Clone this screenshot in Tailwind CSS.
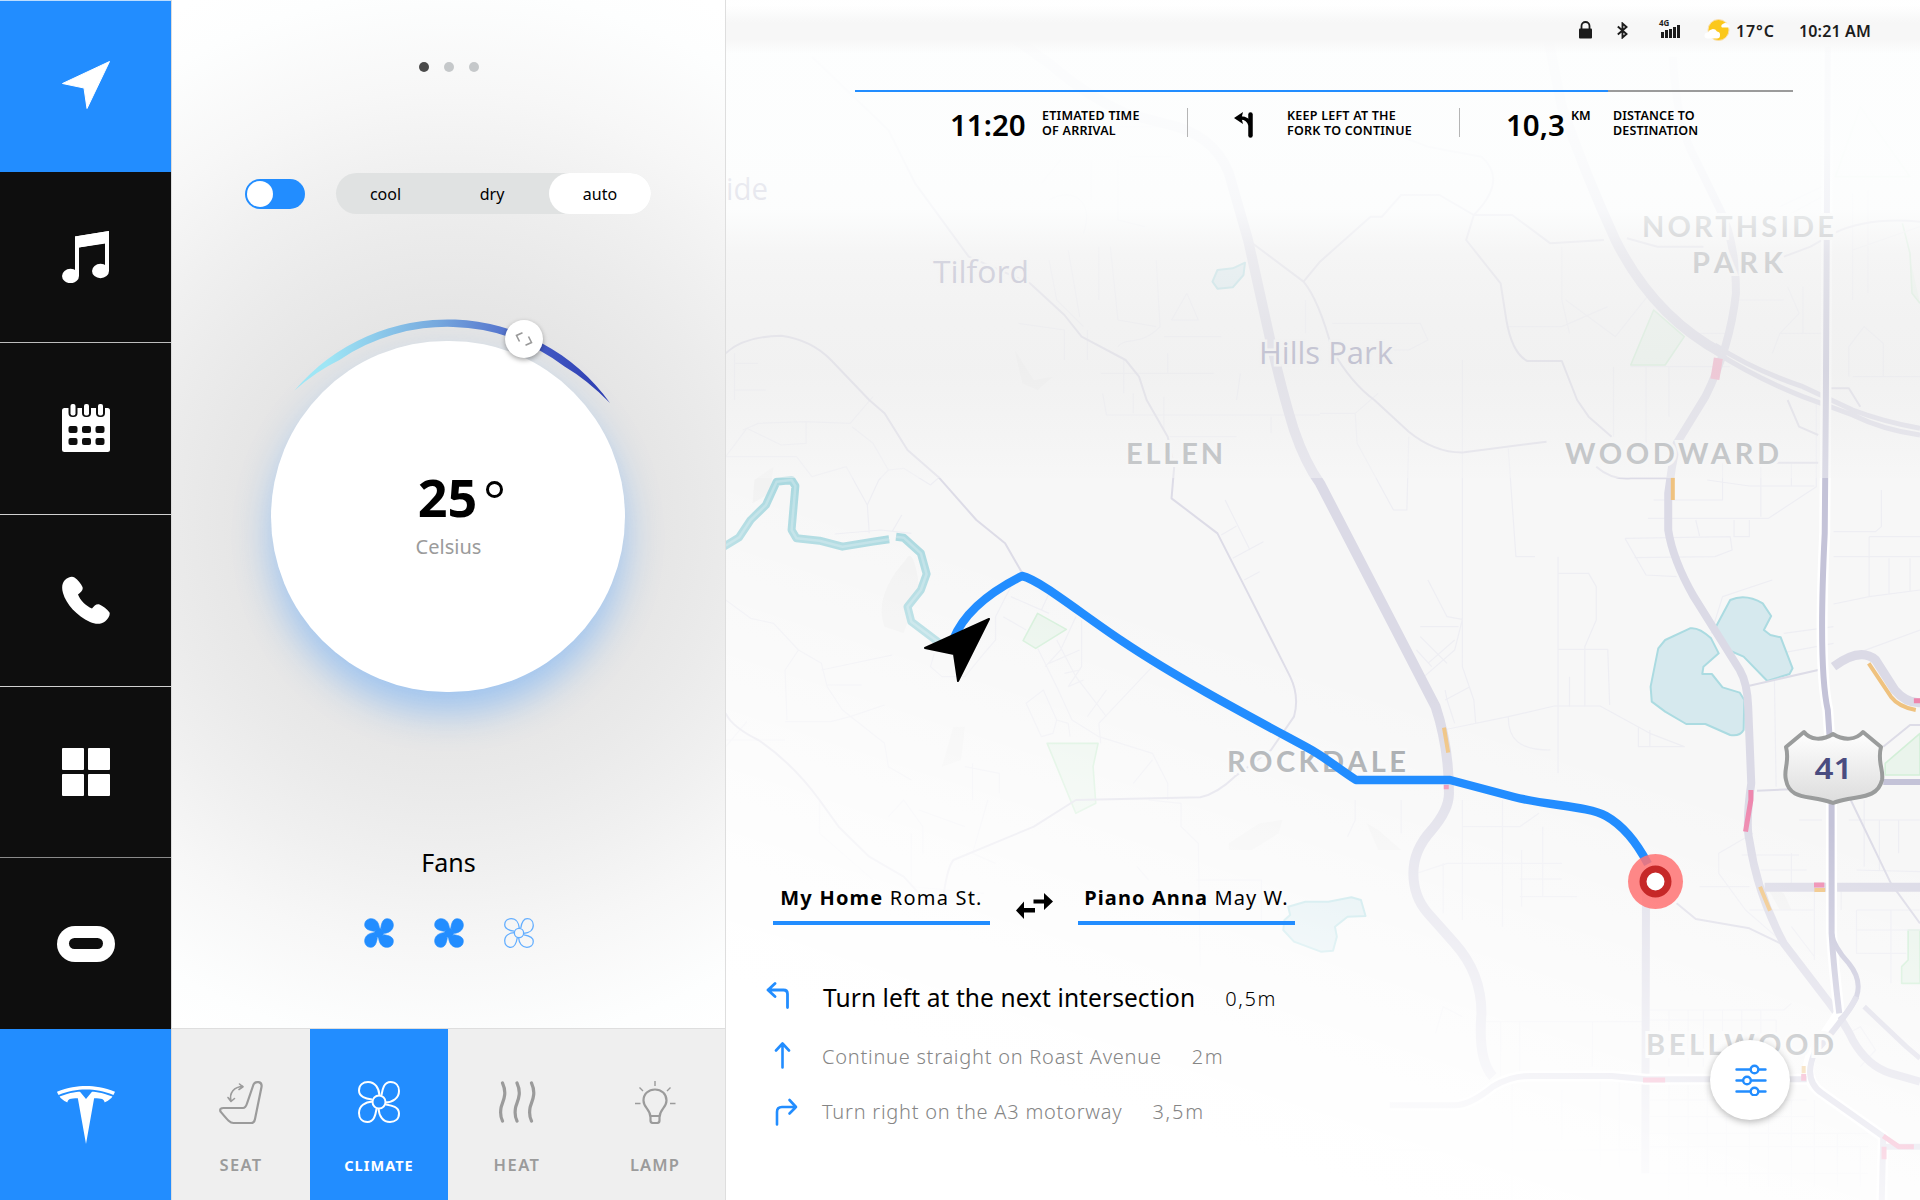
<!DOCTYPE html>
<html lang="en">
<head>
<meta charset="utf-8">
<title>Car dashboard</title>
<script src="https://cdn.jsdelivr.net/npm/@tailwindcss/browser@4"></script>
</head>
<body class="flex w-[1920px] h-[1200px] overflow-hidden bg-white text-black font-['Noto_Sans',sans-serif]">

<svg class="hidden">
  <symbol id="petals" viewBox="0 0 42 42">
    <path id="petal" d="M14 18.500C8 17.500 1 16 1 9.500C1 4 5 1 10 1C17 1 21 7 21.500 14.500"/>
    <use href="#petal" transform="rotate(90 21 21)"/><use href="#petal" transform="rotate(180 21 21)"/><use href="#petal" transform="rotate(270 21 21)"/>
    <circle cx="21" cy="21" r="6.500"/>
  </symbol>
</svg>

<!-- Main navigation -->
<nav class="flex flex-col w-[172px] shrink-0 border-r border-[#dcdcdc] bg-[#0e0e0e] text-white">
  <a class="flex h-[172px] items-center justify-center bg-[#228dff] border-t border-white/70 pb-[3px]"><svg class="size-12" viewBox="0 0 48 48"><path fill="currentColor" stroke="currentColor" stroke-linejoin="round" d="M47.500.500L.500 22.500l21.500 4.500l3 20.500z"/></svg></a>
  <a class="flex h-[171px] items-center justify-center border-b border-[#bdbdbd]"><svg class="size-[52px]" viewBox="0 0 52 52" fill="currentColor"><path d="M15 5.500L49 0v40h-4V12L19 16.500V45h-4z"/><path d="M15 5.500L49 0v12L15 17z"/><ellipse cx="10.500" cy="45" rx="8.500" ry="7.200"/><ellipse cx="40.500" cy="40" rx="8.500" ry="7.200"/></svg></a>
  <a class="flex h-[172px] items-center justify-center border-b border-[#d0d0d0] pb-px"><svg class="size-12" viewBox="0 0 48 48"><rect y="4" width="48" height="44" rx="2.500" fill="#fff"/><g fill="#0e0e0e"><rect x="6.500" y="-3" width="9" height="16" rx="4"/><rect x="20" y="-3" width="9" height="16" rx="4"/><rect x="34" y="-3" width="9" height="16" rx="4"/><rect x="6.500" y="22" width="9" height="7" rx="2"/><rect x="20" y="22" width="9" height="7" rx="2"/><rect x="33.500" y="22" width="9" height="7" rx="2"/><rect x="6.500" y="34" width="9" height="7" rx="2"/><rect x="20" y="34" width="9" height="7" rx="2"/><rect x="33.500" y="34" width="9" height="7" rx="2"/></g><g fill="#fff"><rect x="8.500" y="0" width="5" height="11.500" rx="2"/><rect x="22" y="0" width="5" height="11.500" rx="2"/><rect x="36" y="0" width="5" height="11.500" rx="2"/></g></svg></a>
  <a class="flex h-[172px] items-center justify-center border-b border-[#d0d0d0] pb-px"><svg class="size-12" viewBox="0 0 48 48"><path fill="currentColor" d="M2.500 4.500C6 1 10 0 12.500 1.500C16 4 19 8 20.500 11C21.500 14 19 16.500 16 18.500C18 24 24 30 30 32.500C32 30 34.500 27.500 37.500 28.500C41 30 45 33 47.500 36.500C48.500 39 46 43 43 45.500C39 48.500 33.500 48.500 28 46C15 40 4 28 1 17C-.500 12 0 7.500 2.500 4.500z"/></svg></a>
  <a class="flex h-[171px] items-center justify-center border-b border-[#8a8a8a]"><span class="grid size-12 grid-cols-2 gap-1"><i class="rounded-[1px] bg-white"></i><i class="rounded-[1px] bg-white"></i><i class="rounded-[1px] bg-white"></i><i class="rounded-[1px] bg-white"></i></span></a>
  <a class="flex h-[171px] items-center justify-center"><span class="h-[36px] w-[58px] rounded-[18px] bg-white px-[12px] py-[12.500px]"><i class="block h-full rounded-full bg-[#0e0e0e]"></i></span></a>
  <a class="flex h-[171px] items-center justify-center bg-[#228dff]"><svg class="size-[58px]" viewBox="0 0 24 24"><path fill="currentColor" d="M12 5.362l2.475-3.026s4.245.09 8.471 2.054c-1.082 1.636-3.231 2.438-3.231 2.438-.146-1.439-1.154-1.790-4.354-1.790L12 24 8.619 5.034c-3.180 0-4.188.354-4.335 1.792 0 0-2.146-.795-3.229-2.430C5.280 2.431 9.525 2.340 9.525 2.340L12 5.362zM12 1.463c3.415-.030 7.326.528 11.328 2.280.535-.968.672-1.395.672-1.395C19.625.612 15.528.015 12 0 8.472.015 4.375.610 0 2.349c0 0 .195.525.672 1.396C4.674 1.989 8.585 1.435 12 1.463z"/></svg></a>
</nav>

<!-- Climate panel -->
<section class="flex w-[554px] shrink-0 flex-col items-center border-r border-[#dedede] bg-[radial-gradient(circle_at_277px_520px,#e4e4e4_0px,#e5e5e5_200px,#ebebeb_285px,#f0f0f0_350px,#f7f7f7_430px,#fdfefe_530px,#ffffff_580px)]">
  <div class="mt-[62px] flex gap-[15px]"><i class="size-[10px] rounded-full bg-[#4a4a4a]"></i><i class="size-[10px] rounded-full bg-[#c5c8ca]"></i><i class="size-[10px] rounded-full bg-[#c5c8ca]"></i></div>

  <div class="-ml-px mt-[101px] flex h-[41px] w-[406px] items-center justify-between">
    <div class="mt-px h-[30px] w-[60px] rounded-full bg-[#228dff] p-[2px]"><i class="block size-[26px] rounded-full bg-white"></i></div>
    <div class="flex h-full w-[315px] rounded-full bg-[#e0e2e2] text-base leading-[43px]">
      <span class="w-[99px] text-center">cool</span>
      <span class="w-[114px] text-center">dry</span>
      <span class="w-[102px] rounded-full bg-white text-center">auto</span>
    </div>
  </div>

  <div class="relative -ml-px mt-[127px] flex h-[351px] w-[354px] flex-col items-center rounded-full bg-white shadow-[0_20px_36px_rgba(60,150,255,0.42)]">
    <svg class="absolute -top-[31px] left-0 h-[110px] w-[354px] overflow-visible" viewBox="271.500 310 354 110">
      <defs><linearGradient id="arc"><stop offset="0.100" stop-color="#9fe6f5"/><stop offset="0.450" stop-color="#77a9de"/><stop offset="0.780" stop-color="#4359c4"/><stop offset="1" stop-color="#2b3bb0"/></linearGradient></defs>
      <path fill="url(#arc)" d="M295 390.500A200 200 0 0 1 610.500 403Q588 380 565 366.500A192.500 192.500 0 0 0 340 359.900Q316 371.500 295 390.500z"/>
    </svg>
    <div class="absolute -top-[21px] left-[234px] flex size-[38px] items-center justify-center rounded-full bg-white shadow-[0_2px_5px_rgba(0,0,0,0.350)]"><svg class="size-[18px]" viewBox="0 0 18 18" fill="none" stroke="#999" stroke-width="1.600"><path d="M7.500 2.800L1.500 5.500L4.500 11.500M10.500 15.200L16.500 12.500L13.500 6.500"/></svg></div>
    <div class="mt-[131px] ml-[25px] flex h-[50px] gap-[9px] text-[52px] font-bold leading-[50px]"><span>25</span><i class="mt-[9px] size-[17px] rounded-full border-[3px] border-black"></i></div>
    <div class="mt-[11px] ml-px text-[20px] leading-[28px] text-[#9b9b9b]">Celsius</div>
  </div>

  <div class="mt-[152px] text-[25px] leading-[36px]">Fans</div>
  <div class="mt-[38px] flex gap-10">
    <svg class="size-[30px] overflow-visible fill-[#228dff] stroke-[#228dff]"><use href="#petals"/></svg>
    <svg class="size-[30px] overflow-visible fill-[#228dff] stroke-[#228dff]"><use href="#petals"/></svg>
    <svg class="size-[30px] overflow-visible fill-none stroke-[#63aeff] stroke-[1.800]"><use href="#petals"/></svg>
  </div>

  <div class="mt-auto grid h-[172px] w-full grid-cols-[138px_138px_138px_138px] border-t border-[#dedede] bg-[#efefef] text-[16.500px] font-semibold leading-6 text-[#9b9b9b]">
    <div class="flex flex-col items-center pt-[52px]">
      <svg class="h-[43px] w-[44px] overflow-visible" viewBox="0 0 44 43" fill="none" stroke="currentColor" stroke-width="2.200" stroke-linecap="round" stroke-linejoin="round"><path d="M34.500 3.500C36.500-.500 43.500.500 42.500 6L36 38C35.500 41 34 42 32 42H14.500C11 42 9 39.500 1.500 30.500C.500 28 2 27 4.500 27H24C26 27 27 25.500 28 22.500z"/><path stroke-width="1.600" d="M12 20C10 12 15 5.500 24 5.500M20.500 3L24 5.800L20 8.500M9 16.500L12 20.500L15.500 17.500"/></svg>
      <span class="mt-[29px] tracking-[1.300px]">SEAT</span>
    </div>
    <div class="flex flex-col items-center bg-[#228dff] pt-[52px] text-[14.500px] font-bold text-white">
      <svg class="size-[42px] overflow-visible fill-none stroke-white stroke-2"><use href="#petals"/></svg>
      <span class="mt-[30px] tracking-[1.050px]">CLIMATE</span>
    </div>
    <div class="flex flex-col items-center pt-[52px]">
      <svg class="h-[42px] w-[40px]" viewBox="0 0 40 42" fill="none" stroke="currentColor" stroke-width="3.200" stroke-linecap="round"><path d="M5.500 2C11 14 5 21 4 27C3 33 4 37 5.500 40M20 2C25.500 14 19.500 21 18.500 27C17.500 33 18.500 37 20 40M34.500 2C40 14 34 21 33 27C32 33 33 37 34.500 40"/></svg>
      <span class="mt-[30px] tracking-[1.500px]">HEAT</span>
    </div>
    <div class="flex flex-col items-center pt-[52px]">
      <svg class="h-[43px] w-[42px]" viewBox="0 0 42 43" fill="none" stroke="currentColor" stroke-width="2.200" stroke-linejoin="round"><path d="M16.500 36.500C16.500 28 9.500 27 9.500 19.500C9.500 13 14.500 8.500 21 8.500S32.500 13 32.500 19.500C32.500 27 25.500 28 25.500 36.500V39.500Q25.500 42 23 42H19Q16.500 42 16.500 39.500zM16.500 35H25.500"/><path stroke-width="1.400" d="M21 0V5M5.500 6.500L9 10M36.500 6.500L33 10M1 22.500H6.500M36 22.500H41.500"/></svg>
      <span class="mt-[29px] tracking-[1.100px]">LAMP</span>
    </div>
  </div>
</section>

<!-- Navigation map -->
<main class="relative h-[1200px] grow overflow-hidden bg-[#f7f7f7]">
  <svg class="absolute top-0 -left-[6px] h-[1200px] w-[1200px] [&_path]:[vector-effect:non-scaling-stroke]" viewBox="0 0 3136 3600" preserveAspectRatio="none" fill="none" stroke-linejoin="round">
    <!-- open ground -->
    <g fill="#f2f2f2"><path d="M485 1680C500 1640 515 1700 520 1760L480 1900L430 1880C410 1820 430 1750 485 1680zM90 1440L140 1400L130 1480L85 1510zM770 1050L820 1140L870 1130L830 1170L790 1150zM2730 2650l40 80 30 0-20-50zM1330 2530l80-60 60-10-10 40-70 50-60 0zM1690 2470l30 20 60 60-60 0zM610 2180l30 0-10 100-50 20z"/></g>
    <!-- parks -->
    <g fill="#eaf4ec" stroke="#d3efd8" stroke-width="1.600"><path d="M830 1840L905 1888L825 1945L792 1922zM855 2230H988L975 2300L982 2410L930 2440zM2440 930L2520 1010L2470 1095H2380zM3136 2200L3045 2290V2325H3136zM3136 2790H3105V2880L3088 2900V2950H3136zM3090 670L3110 760L3115 880L3136 910"/><path stroke-opacity=".5" fill="none" d="M2915 530L2980 320L3110 530z"/></g>
    <!-- minor streets -->
    <g stroke="#eeeef3" stroke-width="1.200">
      <path d="M15 1370H200L240 1430L330 1400L385 1515L390 1600M60 1290L100 1270L220 1265L340 1270L400 1190M225 1265V1330L160 1335L70 1285L15 1370M345 1280L400 1330L440 1410L415 1440L385 1515M440 1410L480 1405L550 1455L575 1430M300 1602L420 1590L500 1600M475 1545L450 1595"/>
      <path d="M15 1800L80 1855L140 1870L205 1950L265 1990L280 2060L320 2130L430 2230L440 2300L500 2340M205 1950L170 2010L175 2160M265 2010L450 1965M280 2055H370M170 2165H290L340 2150L430 2115M70 2165L15 2240M15 2220H170"/>
      <path d="M760 1760L720 1850V1920L690 1960L640 2030H580L550 2000L560 1960M760 1790L860 1840M740 1850L800 1890M860 1780L840 1830M930 1850L890 1950L850 2000M945 1860V2000L910 2060M830 1945L880 2060L920 2160L990 2210L1130 2260L1170 2350V2400M880 1920L930 2030L1010 2150M860 1990L940 1950M900 2020L940 2010M910 2060L950 2040M845 2070L880 2160L870 2200L840 2210L800 2110zM880 2160L910 2170L915 2210M960 2150L1010 2070M990 2170L1130 2000M990 2170L995 2230M1080 2350L1130 2280"/>
      <path d="M1320 1500L1385 1650M1310 1605L1350 1578M1340 1675L1420 1625M1370 1740L1410 1715M1000 1180L1010 1245H1568M1080 1180V1240M1175 1310H1350M1440 1250V1300M1160 1190V1290"/>
      <path d="M1940 1200V2000L1970 2100L1975 2170M1660 1240L1665 1330L1760 1530L1795 1530L1800 1310M1568 1240H1660L1720 1180M2060 1345L2080 1670H2130M2190 1670V2320M2190 1720H2270L2290 1760V1860L2260 1940V2120M2190 1948H2320L2325 2115M2220 2030V2120M1890 2190L2060 2150L2180 2118H2300L2430 2200L2520 2240H2400V2180M2430 2190V2240M2060 2150C2060 2220 2090 2250 2170 2250M1895 2070L1900 2100L1920 2170M1960 2060L1895 2100M1850 1740L1900 1850L1940 1858L1920 1950L1840 2030M1830 1880H1930M1830 1910L1900 1990M1850 1990L1920 1920M1820 1950L1860 2000"/>
      <path d="M2440 1500L2620 1500V1390M2425 1555H2740L2865 1460V1200M2365 1615L2420 1725L2500 1730M2365 1615L2640 1610L2645 1650L2600 1670L2390 1673M2550 1560L2560 1608M2650 1560V1610H2690V1560M2720 1400V1550M2580 1440L2690 1458H2860M2800 1390V1458M2910 1595H3020L3035 1580V1470M2910 1670H3136M3003 1610V1790M3003 1610H3136M3055 1675V1780M3110 1675V1775M2910 1812L3003 1790L3136 1770M2910 1880L2780 1900M2910 1930L2770 1960M2590 1900L2620 1790L2750 1740M2755 2000L2760 2360M2970 1960L3136 1890"/>
      <path d="M1040 380H1180M1070 470H1180M890 480L840 550M970 480V600M1040 480V660L1110 680M860 600C920 560 980 600 950 700M780 970L900 990V1080M860 780L880 900L950 980M910 750L940 950M990 740V900M1020 740L1040 960L1140 980M1140 780L1150 980C1100 1040 1060 1010 1040 1040M1220 880L1180 960H1250zM1160 1010H1310M960 990V1080M1055 1080V1180M995 1120H1290M1170 1060V1120M1360 1120L1350 1200M1530 900V1000M38 1060V1200M40 1090H100M40 1170H120"/>
      <path d="M1600 970H1830L1850 1020L1800 1050H1760M2200 740V900L2220 1000M2060 980H2200L2320 920M2210 900L2340 1010L2430 880M2380 1100H2640M2335 1100V1310M2420 1100V1330M2480 1100V1250M1940 1080V1200M2650 900H2780M2560 1000H2640M2770 1000H2880M2790 860L2820 940L2770 1000L2750 1060M2770 620L2880 560M2800 640L2880 590M2960 580V900M3000 570V880M2960 750L3136 680M2950 1130V1040L2990 980L3040 1030V1130M2960 1130H3136M2830 860V1000"/>
      <path d="M1660 2400V2460L1640 2510M1780 2400V2500M1940 2400V2760M1940 2480H2090L2140 2440M2045 2400V2780M2095 2550V2720M2150 2480L2150 2690M1820 2620L1900 2590H2200M1890 2590V2740M2090 2637H2200M2090 2690H2240M2700 2500L2610 2560L2610 2620L2680 2730L2780 2830M2670 2565H2820M2720 2610H2840M2800 2560V2650M2820 2460H2880M2950 2460H3136M2990 2400V2600M3030 2460V2610M3080 2460V2560M2970 2610L3136 2615M2560 2660H2690M2690 2730H2860M2860 2660V2880M2970 2730H3136M2970 2730V2860H3100M2970 2790H3136M2930 2730V2660M3060 2730V2950M2800 2780L2860 2870"/>
      <path d="M2430 3030H2780L2800 3010M2430 3060H2760V3200M2480 3030V3200M2530 3030V3200M2570 3030V3200M2620 3030V3100M2670 3030V3100M2720 3030V3100M1990 3065H2410M2040 3065V3230M2090 3065V3240M2280 3065V3200M2300 3240V3500M2350 3240V3500M2200 3270V3420M2070 3240V3600M1750 3450H2400M2430 3300H2840M2430 3350H2860M2430 3400H3000M2430 3440H3000M2430 3520H3000M2480 3250V3600M2530 3250V3600M2580 3250V3560M2630 3350V3560M2690 3350V3560M2740 3300V3560M2800 3300V3560M2860 3300V3560M2920 3400V3560M2980 3440V3560M1870 3100L1890 3020L1940 3050M2950 3100L2980 3080L3020 3150L2980 3200"/>
      <path d="M440 2450L480 2400L530 2480V2560M260 2400V2500L400 2640M700 2400L660 2560L720 2590M1120 2400L1205 2410V2480L1250 2530L1255 2900M1245 2640H1415V2760M520 2430L640 2480M500 2500V2660L690 2680M1090 2600L1120 2640M640 2300L730 2320V2380M660 2290V2400"/>
    </g>
    <!-- river and lakes -->
    <path stroke="#abd9e0" stroke-width="8" d="M10 1640L50 1612L80 1560L120 1515L148 1445L187 1440L197 1458L187 1590L200 1615L260 1622L320 1640L400 1625L442 1618M460 1610L480 1613L525 1660L540 1722L525 1770L490 1820L500 1865L575 1930"/>
    <path stroke="#bfe1e7" stroke-width="2.500" d="M10 1640L50 1612L80 1560L120 1515L148 1445L187 1440L197 1458L187 1590L200 1615L260 1622L320 1640L400 1625L442 1618M460 1610L480 1613L525 1660L540 1722L525 1770L490 1820L500 1865L575 1930"/>
    <g fill="#d6e9ee" stroke="#abdbe1" stroke-width="2"><path d="M2535 1885C2550 1882 2565 1888 2590 1915L2610 1960L2570 2000L2567 2022L2592 2022L2620 2062L2665 2078L2677 2100L2675 2190Q2665 2210 2640 2205L2575 2172H2525L2470 2135L2435 2105L2432 2060L2452 1945L2470 1920zM2640 1800Q2680 1780 2725 1810L2747 1848L2728 1890L2745 1905L2772 1912L2803 2005L2795 2022L2737 2043L2675 1970L2635 1950L2602 1882zM1485 2720L1530 2705H1590L1650 2692L1675 2700L1687 2748L1640 2750L1607 2780L1612 2810L1602 2852L1570 2855L1500 2825L1472 2790L1475 2760L1490 2745zM1300 810L1340 805L1372 788L1368 825L1340 862L1300 866L1287 845z"/></g>
    <!-- secondary roads -->
    <g stroke="#dddce7" stroke-width="2">
      <path d="M240 170L440 390L510 550L650 770L810 850L900 945L945 1010L1060 1080L1095 1130L1115 1200L1170 1310L1187 1400L1180 1495L1300 1600L1380 1780L1490 2030Q1515 2090 1500 2150L1440 2250L1345 2330Q1300 2380 1255 2392L930 2400L820 2480L610 2580Q595 2600 585 2680"/>
      <path d="M15 1060Q60 1010 160 1007Q240 1020 290 1080L390 1200L430 1240L490 1350L570 1430L670 1560L745 1630L790 1720"/>
      <path d="M1380 720L1525 845Q1565 900 1600 1050Q1650 1150 1710 1200L1800 1295Q1870 1360 1945 1357L2160 1325M2290 1400Q2330 1440 2380 1435H2490M2490 1437M1525 845L1568 785L1700 650H1730L1780 585H1880L1970 645H2070L2170 730L2310 720M2370 715L2450 740H2570M1970 645L1950 720L2040 850L2055 960Q2070 1060 2110 1083H2200L2240 1200L2270 1250L2330 1310M1970 645Q2060 540 1990 470L1850 440L1780 410M2780 770L2850 740L2910 700Q3000 650 3136 665M2760 1388H2870"/>
      <path d="M2500 2710L2550 2757L2690 2785L2790 2840M2690 2057L2870 2010M2955 2400L3060 2650L3136 2770M3040 2240L3110 2175H3136M2710 2372L2800 2368M2790 1200L2820 1280L2870 1305M2900 1165H2950L2980 1220"/>
      <path d="M15 2140Q30 2180 100 2220Q190 2290 260 2400L310 2480L390 2570L480 2630L520 2680"/>
    </g>
    <!-- highways -->
    <g stroke="#dbdae6">
      <path stroke-width="10" d="M700 60L860 190Q960 290 1060 340L1160 370Q1290 400 1330 520Q1350 600 1380 720L1440 1030Q1470 1180 1500 1290Q1530 1390 1568 1450L1870 2120Q1905 2240 1905 2380Q1905 2430 1860 2490Q1812 2550 1812 2620T1850 2740L1920 2830Q1990 2920 1990 3040Q1980 3180 2020 3230"/>
      <path stroke-width="10" d="M2165 120L2200 320Q2260 520 2340 720Q2440 950 2620 1060"/>
      <path stroke-width="5" d="M2600 1035Q2700 1110 2830 1160L2960 1230Q3040 1265 3136 1285M2600 1055Q2700 1130 2830 1190L2960 1245Q3040 1290 3136 1305"/>
      <path stroke-width="8" d="M2490 170Q2500 380 2550 480L2610 620Q2655 720 2655 880Q2640 1040 2575 1190L2500 1330L2488 1400L2478 1480V1590Q2490 1680 2545 1790L2665 2010Q2685 2050 2687 2120L2695 2350Q2680 2470 2690 2520Q2710 2680 2780 2830L2900 3010Q2945 3080 2960 3120Q3000 3200 3060 3220L3136 3245"/>
      <path stroke-width="9" d="M2730 2662H3136M2910 2000Q2980 1940 3020 1980L3070 2070Q3100 2110 3136 2108"/>
      <path stroke-width="5" d="M2990 3020L3100 3140L3136 3175"/>
      <path stroke-width="8" d="M2420 2650L2418 3520"/>
    </g>
    <g stroke="#fff" stroke-width="11"><path d="M2895 140L2890 1200L2887 1600Q2870 2000 2895 2130L2905 2300V2800Q2910 2900 2925 3040L2850 3170Q2830 3240 2880 3280L3040 3410L3036 3600M1750 3316H1920Q1960 3316 2020 3260Q2070 3225 2130 3228H2330L2420 3238H2840"/></g>
    <g stroke="#c4c3d8"><path stroke-width="6" d="M2895 140L2890 1200L2887 1600Q2870 2000 2895 2130L2905 2300V2800Q2910 2900 2925 3040"/><path stroke-width="5" d="M2905 2800Q2910 2840 2950 2890Q2985 2940 2970 2990Q2950 3040 2925 3060"/>
      <path stroke="#d2d1e1" stroke-width="6" d="M2970 2990Q2950 3040 2860 3160Q2830 3240 2880 3280L3040 3410L3036 3600M3040 3440H3136M1750 3316H1920Q1960 3316 2020 3260Q2070 3225 2130 3228H2330L2420 3238H2840"/>
      <path stroke-width="6" d="M3040 2346H3136"/></g>
    <!-- traffic -->
    <g stroke="#efc27f" stroke-width="4"><path d="M2490 1433V1500M1892 2183L1903 2258M3002 1990L3060 2090Q3080 2120 3125 2130M2718 2660L2744 2732M2860 2670H2888M2832 3198V3220"/></g>
    <g stroke="#ee86ad" stroke-width="5"><path d="M2609 1075L2600 1138" stroke="#f0a9c3" stroke-width="9"/><path d="M2694 2370V2400L2680 2495M2859 2655H2886M1898 2355V2368M3120 2102H3136M2412 3240H2470M2832 3222V3242M3040 3408L3080 3440H3120M3042 3440V3478"/></g>
  </svg>

  <!-- place names and route shield -->
  <svg class="absolute inset-0 h-[1200px] w-[1194px]" viewBox="726 0 1194 1200">
    <defs><linearGradient id="sh" x2="0" y2="1"><stop stop-color="#fff"/><stop offset="1" stop-color="#dcdcdc"/></linearGradient></defs>
    <g fill="#9d9dba" stroke="#f6f6f6" stroke-width="5" paint-order="stroke" font-family="Open Sans, sans-serif" font-weight="500" font-size="31">
      <text x="712" y="200" textLength="56" lengthAdjust="spacingAndGlyphs" fill="#6d6d98">side</text>
      <text x="933" y="282.500" textLength="96" lengthAdjust="spacingAndGlyphs">Tilford</text>
      <text x="1259" y="364" textLength="134" lengthAdjust="spacingAndGlyphs">Hills Park</text>
    </g>
    <g fill="#9da1a5" stroke="#f8f8f8" stroke-width="6" paint-order="stroke" font-family="Lato, sans-serif" font-weight="700" font-size="29">
      <text x="1642" y="237" textLength="192" fill="#8d9195">NORTHSIDE</text>
      <text x="1692" y="272.500" textLength="91" fill="#96999d">PARK</text>
      <text x="1126" y="463.500" textLength="97">ELLEN</text>
      <text x="1565" y="463.500" textLength="214">WOODWARD</text>
      <text x="1227" y="771.500" textLength="179">ROCKDALE</text>
      <text x="1646" y="1054.500" textLength="188">BELLWOOD</text>
    </g>
    <path fill="url(#sh)" stroke="#9a9c9c" stroke-width="4" stroke-linejoin="round" d="M1804 732C1810 740 1822 741 1833 734C1844 741 1856 740 1863 732L1881 747C1877 762 1884 770 1882 780C1878 797 1862 796 1848 799Q1838 801 1833 803Q1828 801 1818 799C1804 796 1789 797 1786 780C1783 770 1790 762 1786 747z"/>
    <text x="1814.500" y="778.500" font-family="Noto Sans, sans-serif" font-weight="600" font-size="29" fill="#4a4c80" textLength="38" lengthAdjust="spacingAndGlyphs">41</text>
  </svg>

  <!-- fades -->
  <div class="absolute inset-x-0 top-0 h-[478px] bg-[linear-gradient(to_bottom,#fffffff6_0px,#fdfefef2_60px,#fdfefeea_150px,#fdfefed2_210px,#f4f4f4aa_255px,#eeeeee8c_320px,#ebebeb7a_370px,#f0f0f077_430px,#f6f6f677_478px)]"></div>
  <div class="absolute inset-x-0 top-[6px] h-[48px] bg-[linear-gradient(to_bottom,#f7f7f700,#f7f7f7_35%,#f7f7f7_70%,#f7f7f700)]"></div>
  <div class="absolute inset-0 bg-[linear-gradient(18deg,#ffffff_0px,#ffffff_210px,#ffffffe0_320px,#ffffffa0_440px,#ffffff00_700px)]"></div>

  <!-- active route -->
  <svg class="absolute inset-0 h-[1200px] w-[1194px]" viewBox="726 0 1194 1200" fill="none">
    <path stroke="#228dff" stroke-width="8.500" stroke-linejoin="round" d="M953 640C964 612 990 592 1022 576C1040 580 1080 613 1122 641C1180 680 1260 722 1308 748C1325 757 1340 770 1356 780H1450L1514 797C1550 806 1588 806 1606 816C1624 826 1638 845 1648 864"/>
    <path fill="#000" stroke="#000" stroke-width="2" stroke-linejoin="round" d="M989 619L925 648L954 654L958 681z"/>
    <circle cx="1655.500" cy="881.500" r="27.500" fill="#ff7474" fill-opacity=".86"/><circle cx="1655.500" cy="881.500" r="12.500" fill="#fff" stroke="#c62828" stroke-width="7"/>
  </svg>

  <div class="relative flex h-full flex-col">
    <div class="flex h-[60px] items-center justify-end pr-[48px] text-[16px] font-semibold text-[#1c1c1c]">
      <svg class="h-[18px] w-[13px]" viewBox="0 0 13 18"><path fill="none" stroke="currentColor" stroke-width="1.800" d="M2.500 8V5a4 4 0 0 1 8 0v3"/><rect y="7.500" width="13" height="10" rx="1" fill="currentColor"/></svg>
      <svg class="ml-[25px] h-[17px] w-[11px]" viewBox="0 0 11 17" fill="none" stroke="currentColor" stroke-width="1.900"><path d="M.800 4.500L9.500 12L5.500 15.500V1.500L9.500 5L.800 12.500"/></svg>
      <div class="ml-[31px] flex w-[20px] flex-col items-start"><span class="-mt-[3px] text-[8px] font-bold leading-[7px]">4G</span><span class="-mt-px ml-[2px] flex h-[13px] items-end gap-[1.500px]"><i class="h-[6px] w-[2.500px] bg-current"></i><i class="h-[8px] w-[2.500px] bg-current"></i><i class="h-[9px] w-[2.500px] bg-current"></i><i class="h-[11px] w-[2.500px] bg-current"></i><i class="h-[13px] w-[2.500px] bg-current"></i></span></div>
      <svg class="ml-[26px] h-[22px] w-[25px] overflow-visible" viewBox="0 0 25 22"><circle cx="13.500" cy="11" r="10.500" fill="#fbc81b" stroke="#fbe0b0"/><path fill="#fff" d="M2 19.500a3 3 0 0 1 1-6a5 5 0 0 1 9-1a3.500 3.500 0 0 1 3 4q0 3-3 3zM17 8.500a2 2 0 0 1 1-3.500a3 3 0 0 1 5 .500q2 .500 1.500 3z"/></svg>
      <span class="mt-px ml-[6px] w-[38px] whitespace-nowrap tracking-[0.900px]">17°C</span>
      <span class="mt-px ml-[25px] w-[73px] whitespace-nowrap tracking-[0.150px]">10:21 AM</span>
    </div>
    <div class="mt-[30px] ml-[129px] flex h-[2px] w-[938px] bg-[#9b9b9b]"><i class="w-[753px] bg-[#228dff]"></i></div>
    <div class="mt-[15px] ml-[224px] flex h-[30px] items-center text-[12.500px] font-semibold leading-[15px]">
      <span class="mt-[5px] w-[92px] text-[29.500px] font-semibold leading-[30px]">11:20</span>
      <p class="mt-[2px] w-[145px] whitespace-nowrap tracking-[0.230px]">ETIMATED TIME<br>OF ARRIVAL</p>
      <i class="h-[29px] w-px bg-[#b5b5b5]"></i>
      <svg class="ml-[46px] mt-[5px] h-[26px] w-[19px]" viewBox="0 0 19 26"><path fill="none" stroke="#000" stroke-width="4.500" d="M16.500 2.500V23.500" stroke-linecap="round"/><path fill="none" stroke="#000" stroke-width="3.500" d="M16 13Q14 6 7 6"/><path d="M0 6L9 0L7.500 6L9 12z"/></svg>
      <p class="ml-[34px] mt-[2px] w-[172px] whitespace-nowrap tracking-[0.230px]">KEEP LEFT AT THE<br>FORK TO CONTINUE</p>
      <i class="h-[29px] w-px bg-[#b5b5b5]"></i>
      <span class="mt-[5px] ml-[46px] w-[65px] text-[29.500px] font-semibold leading-[30px]">10,3</span>
      <span class="-mt-[13px] w-[42px]">KM</span>
      <p class="mt-[2px] whitespace-nowrap tracking-[0.150px]">DISTANCE TO<br>DESTINATION</p>
    </div>

    <div class="mt-[747px] ml-[47px] flex text-[20px] leading-[28px] whitespace-nowrap">
      <div class="flex h-[41px] w-[217px] justify-center border-b-4 border-[#228dff] tracking-[1.200px]"><span><b>My Home</b> Roma St.</span></div>
      <svg class="ml-[26px] mt-[8px] h-[27px] w-[37px]" viewBox="0 0 37 27"><path d="M17.500 7.500H28V1L37 9.500L28 18V11.500H17.500zM19 16H8V9.500L0 18.500L8 27V20.500H19z"/></svg>
      <div class="ml-[25px] flex h-[41px] w-[217px] justify-center border-b-4 border-[#228dff] tracking-[1.100px]"><span><b>Piano Anna</b> May W.</span></div>
    </div>

    <ul class="mt-[55px] ml-[40px] flex flex-col whitespace-nowrap text-[20px] font-light tracking-[0.750px] text-[#858585]">
      <li class="flex h-[36px] items-center text-black"><svg class="-mt-[5px] mr-[34px] h-[27px] w-[23px]" viewBox="0 0 23 27" fill="none" stroke="#228dff" stroke-width="2.800" stroke-linecap="round" stroke-linejoin="round"><path d="M21.500 25.500V12Q21.500 8 17.500 8H2M9 1.500L2 8L9 14.500"/></svg><span class="mr-[30px] text-[24.500px] font-normal tracking-[0.080px]">Turn left at the next intersection</span><span class="mt-[2px] tracking-[1.700px]">0,5m</span></li>
      <li class="mt-[23px] flex h-[36px] items-center"><svg class="-mt-[3px] ml-[8px] mr-[31px] h-[27px] w-[17px]" viewBox="0 0 17 27" fill="none" stroke="#228dff" stroke-width="2.600" stroke-linecap="round" stroke-linejoin="round"><path d="M8.500 25.500V2M2 8.500L8.500 1.500L15 8.500"/></svg><span class="mr-[30px]">Continue straight on Roast Avenue</span><span class="tracking-[1.600px]">2m</span></li>
      <li class="mt-[19px] flex h-[36px] items-center"><svg class="ml-[9px] mr-[24px] h-[28px] w-[23px]" viewBox="0 0 23 28" fill="none" stroke="#228dff" stroke-width="2.600" stroke-linecap="round" stroke-linejoin="round"><path d="M2 26.500V14Q2 9 7 9H21M14.500 2L21 9L14.500 15.500"/></svg><span class="mr-[30px]">Turn right on the A3 motorway</span><span class="tracking-[1.800px]">3,5m</span></li>
    </ul>
  </div>

  <button class="absolute left-[984px] top-[1040px] flex size-20 items-center justify-center rounded-full bg-white pl-[2px] shadow-[0_2px_7px_rgba(0,0,0,0.280)]"><svg class="size-8 fill-white stroke-[#228dff]" viewBox="0 0 32 32" stroke-width="2.400" stroke-linecap="round"><path d="M1.500 5.500H30.500M1.500 16.500H30.500M1.500 27.500H30.500"/><circle cx="19.500" cy="5.500" r="3.800"/><circle cx="12" cy="16.500" r="3.800"/><circle cx="19.500" cy="27.500" r="3.800"/></svg></button>
</main>
</body>
</html>
